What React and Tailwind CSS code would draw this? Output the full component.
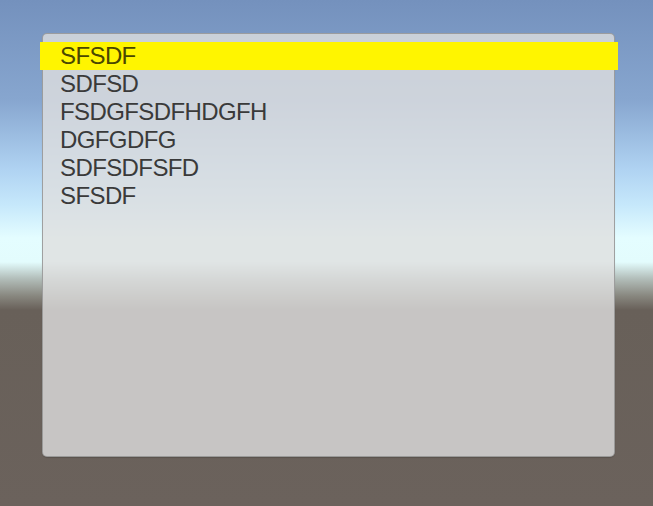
const items = ['SFSDF', 'SDFSD', 'FSDGFSDFHDGFH', 'DGFGDFG', 'SDFSDFSFD', 'SFSDF'];

const App = () => {
    return (
        <div className="h-[506px] w-full overflow-hidden bg-[linear-gradient(to_bottom,#7491bd_0px,#87a6cf_100px,#b0d3f2_170px,#c6e8fb_205px,#e4fdff_238px,#e3fcfd_262px,#b4c0bc_278px,#88877f_296px,#686059_310px,#6b625c_506px)] pt-[33px] pl-[42px]">
            <div className="w-[573px] h-[424px] rounded-[5px] border border-[#8f8f8f]/80 bg-[rgba(223,223,223,0.8)] pt-[8px] shadow-[0_1px_1px_rgba(0,0,0,0.15)]">
                <ul className="font-['Liberation_Sans',Arial,sans-serif] text-[24px] leading-[28px] tracking-[-0.6px] text-[#3a3a3a]">
                    {items.map((item, i) => (
                        <li
                            key={i}
                            className={
                                i === 0
                                    ? 'h-[28px] -ml-[3px] -mr-[4px] pl-[20px] bg-[#fff500] text-[#4a4700]'
                                    : 'h-[28px] pl-[17px]'
                            }
                        >
                            {item}
                        </li>
                    ))}
                </ul>
            </div>
        </div>
    );
};

export default App;
